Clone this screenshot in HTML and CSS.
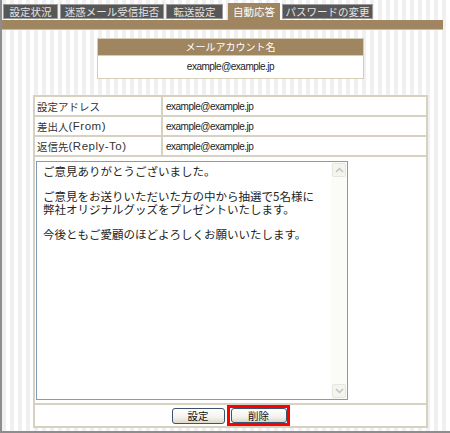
FILE: index.html
```html
<!DOCTYPE html>
<html lang="ja">
<head>
<meta charset="utf-8">
<link rel="stylesheet" href="styles.css">
</head>
<body>
<div class="frame">
  <div class="tabs">
    <span class="tab tab-w1">設定状況</span>
    <span class="tab tab-w2">迷惑メール受信拒否</span>
    <span class="tab tab-w3">転送設定</span>
    <span class="tab tab-active">自動応答</span>
    <span class="tab tab-w5">パスワードの変更</span>
  </div>
  <div class="bar"></div>
  <div class="content">
    <div class="account">
      <div class="account-head">メールアカウント名</div>
      <div class="account-val">example@example.jp</div>
    </div>
    <div class="form">
      <div class="cell label">設定アドレス</div>
      <div class="cell value">example@example.jp</div>
      <div class="cell label">差出人<span class="lat">(From)</span></div>
      <div class="cell value">example@example.jp</div>
      <div class="cell label">返信先<span class="lat">(Reply-To)</span></div>
      <div class="cell value">example@example.jp</div>
      <div class="cell wide ta-cell">
        <div class="ta">
          <textarea class="ta-text" spellcheck="false">ご意見ありがとうございました。

ご意見をお送りいただいた方の中から抽選で5名様に
弊社オリジナルグッズをプレゼントいたします。

今後ともご愛顧のほどよろしくお願いいたします。</textarea>
          <div class="sb">
            <div class="sb-btn"><svg width="9" height="6" viewBox="0 0 9 6"><path d="M1 5 L4.5 1.5 L8 5" fill="none" stroke="#c3c3bb" stroke-width="1.5"/></svg></div>
            <div class="sb-track"></div>
            <div class="sb-btn"><svg width="9" height="6" viewBox="0 0 9 6"><path d="M1 1 L4.5 4.5 L8 1" fill="none" stroke="#c3c3bb" stroke-width="1.5"/></svg></div>
          </div>
        </div>
      </div>
      <div class="cell wide btn-cell">
        <button class="btn btn-set">設定</button>
        <span class="mark"><button class="btn btn-del">削除</button></span>
      </div>
    </div>
  </div>
</div>
</body>
</html>
```
FILE: styles.css
```css
html, body {
  margin: 0;
  padding: 0;
}
body {
  font-family: "Noto Sans CJK JP", sans-serif;
}
.frame {
  width: 450px;
  height: 433px;
  box-sizing: border-box;
  border-left: 2px solid #8d8d8d;
  border-bottom: 2px solid #8d8d8d;
  background: repeating-linear-gradient(90deg, #f0f0f0 0 4px, #ffffff 4px 8px);
  overflow: hidden;
}
.tabs {
  display: flex;
  align-items: flex-end;
  gap: 2px;
  height: 20px;
  box-sizing: border-box;
  padding-left: 1px;
}
.tab {
  display: block;
  box-sizing: border-box;
  height: 15px;
  margin-bottom: 1px;
  background: #575757;
  border: 1px solid #9a9a9a;
  color: #e4e4e4;
  font-size: 10.5px;
  line-height: 13px;
  text-align: center;
  white-space: nowrap;
}
.tab-w1 { width: 55px; }
.tab-w2 { width: 104px; }
.tab-w3 { width: 57px; }
.tab-w5 { width: 91px; }
.tab-active {
  width: 53px;
  height: 17px;
  margin-bottom: 0;
  margin-left: 2px;
  background: #9f8560;
  border: none;
  border-left: 1px solid #e8e2d4;
  color: #ffffff;
  line-height: 17px;
}
.bar {
  width: 441px;
  height: 10px;
  box-sizing: border-box;
  background: #9f8560;
  border-bottom: 1px solid #c9bb9f;
}
.content {
  padding-left: 9px;
}
.account {
  width: 265px;
  margin: 8px auto 0;
  border: 1px solid #d3cdb8;
  background: #ffffff;
}
.account-head {
  height: 16px;
  background: #9f8560;
  border-bottom: 1px solid #d3cdb8;
  color: #ffffff;
  font-size: 10px;
  line-height: 16px;
  text-align: center;
}
.account-val {
  height: 22px;
  font-family: "Liberation Sans", sans-serif;
  font-size: 10px;
  letter-spacing: -0.5px;
  line-height: 22px;
  color: #222;
  text-align: center;
}
.form {
  width: 395px;
  margin: 16px auto 0;
  box-sizing: border-box;
  display: grid;
  grid-template-columns: 126px 1fr;
  grid-template-rows: 18px 18px 18px 246px 21px;
  gap: 2px;
  padding: 2px;
  background: #d6d1c0;
}
.cell {
  background: #ffffff;
  display: flex;
  align-items: center;
}
.wide {
  grid-column: 1 / 3;
}
.label {
  padding-left: 2px;
  font-size: 10.5px;
  color: #333;
  white-space: nowrap;
}
.lat {
  font-family: "Liberation Sans", sans-serif;
  font-size: 11.5px;
  letter-spacing: 0.5px;
}
.value {
  padding-left: 3px;
  font-family: "Liberation Sans", sans-serif;
  font-size: 10px;
  letter-spacing: -0.5px;
  color: #222;
}
.ta-cell {
  align-items: flex-start;
  padding: 4px 0 0 1px;
}
.ta {
  display: flex;
  width: 312px;
  height: 239px;
  box-sizing: border-box;
  border: 1px solid #7f9db9;
  background: #ffffff;
}
.ta-text {
  flex: 1;
  margin: 0;
  border: none;
  outline: none;
  resize: none;
  overflow: hidden;
  padding: 3px 0 0 6px;
  font-family: "Noto Sans CJK JP", sans-serif;
  font-size: 11.5px;
  line-height: 12.5px;
  color: #222;
  background: #ffffff;
}
.sb {
  width: 16px;
  display: flex;
  flex-direction: column;
  background: #fbfbf8;
}
.sb-btn {
  width: 14px;
  height: 14px;
  margin: 1px;
  box-sizing: border-box;
  border: 1px solid #e6e6df;
  border-radius: 2px;
  background: #f5f5f0;
  display: flex;
  align-items: center;
  justify-content: center;
}
.sb-track {
  flex: 1;
}
.btn-cell {
  justify-content: center;
  gap: 2px;
}
.btn {
  box-sizing: border-box;
  margin: 0;
  padding: 0;
  border: 1px solid #3d5470;
  border-radius: 3px;
  background: linear-gradient(#ffffff, #f3f2ec 60%, #dcd9cc);
  font-family: "Noto Sans CJK JP", sans-serif;
  font-size: 10.5px;
  line-height: 13px;
  color: #111;
}
.btn-set {
  width: 53px;
  height: 16px;
}
.mark {
  display: flex;
  border: 3px solid #ff0000;
  padding-left: 1px;
}
.btn-del {
  width: 56px;
  height: 15px;
}
```
